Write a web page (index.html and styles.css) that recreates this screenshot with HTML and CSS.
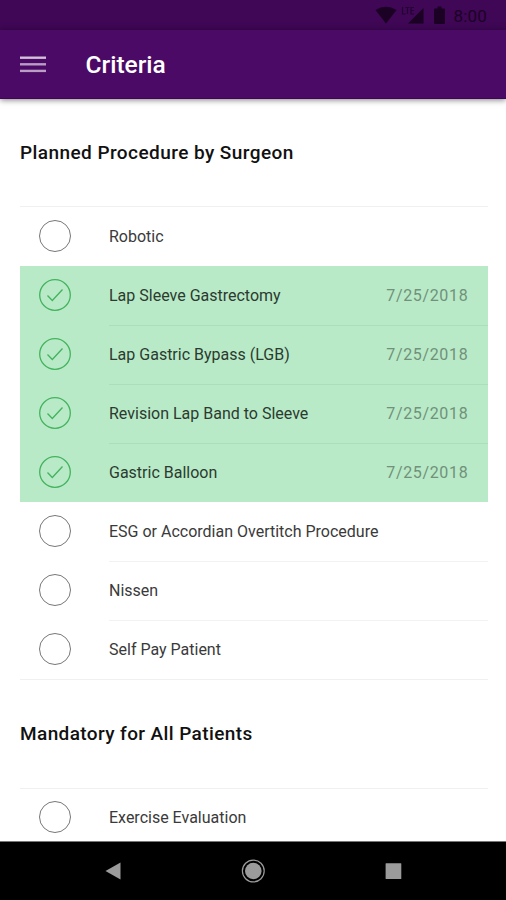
FILE: index.html
```html
<!DOCTYPE html>
<html lang="en">
<head>
<meta charset="utf-8">
<title>Criteria</title>
<link rel="stylesheet" href="styles.css">
</head>
<body>
<div class="status">
  <svg class="status-icons" viewBox="0 0 80 30">
    <path d="M3.500 10Q14 3.500 24.500 10L14 23.500Z"/>
    <path d="M65 8.500h3.500V6.500h4v2H75a1 1 0 0 1 1 1v13.500a1 1 0 0 1-1 1H66a1 1 0 0 1-1-1V9.500a1 1 0 0 1 1-1Z" transform="translate(-3 0)"/>
    <path d="M51.500 8v15.500H36Z"/>
    <path class="lte" d="M30.500 7v7h3M33.500 7.500h4M35.500 7.500V14M42 7.500h-3V14h3M39 10.500h3"/>
  </svg>
  <span class="time">8:00</span>
</div>
<header class="appbar">
  <svg class="menu" viewBox="0 0 26 18"><path class="m1" d="M0 1.700h26"/><path d="M0 8.300h26"/><path d="M0 14.900h26"/></svg>
  <h1>Criteria</h1>
</header>
<main>
  <h2>Planned Procedure by Surgeon</h2>
  <ul>
    <li><i class="ring"></i><div class="cell"><span>Robotic</span></div></li>
    <li class="on"><svg class="check" viewBox="0 0 32 32"><circle cx="16" cy="16" r="15.300"/><path d="M8.500 16.500l4.800 5L23.500 10.500"/></svg><div class="cell"><span>Lap Sleeve Gastrectomy</span><time>7/25/2018</time></div></li>
    <li class="on"><svg class="check" viewBox="0 0 32 32"><circle cx="16" cy="16" r="15.300"/><path d="M8.500 16.500l4.800 5L23.500 10.500"/></svg><div class="cell"><span>Lap Gastric Bypass (LGB)</span><time>7/25/2018</time></div></li>
    <li class="on"><svg class="check" viewBox="0 0 32 32"><circle cx="16" cy="16" r="15.300"/><path d="M8.500 16.500l4.800 5L23.500 10.500"/></svg><div class="cell"><span>Revision Lap Band to Sleeve</span><time>7/25/2018</time></div></li>
    <li class="on"><svg class="check" viewBox="0 0 32 32"><circle cx="16" cy="16" r="15.300"/><path d="M8.500 16.500l4.800 5L23.500 10.500"/></svg><div class="cell"><span>Gastric Balloon</span><time>7/25/2018</time></div></li>
    <li><i class="ring"></i><div class="cell"><span>ESG or Accordian Overtitch Procedure</span></div></li>
    <li><i class="ring"></i><div class="cell"><span>Nissen</span></div></li>
    <li><i class="ring"></i><div class="cell"><span>Self Pay Patient</span></div></li>
  </ul>
  <h2 class="second">Mandatory for All Patients</h2>
  <ul>
    <li><i class="ring"></i><div class="cell"><span>Exercise Evaluation</span></div></li>
  </ul>
</main>
<nav>
  <svg viewBox="0 0 24 24"><path d="M19.500 3.500v17L4.500 12Z"/></svg>
  <svg viewBox="0 0 24 24"><circle cx="12.300" cy="12" r="8.300"/><circle class="outer" cx="12.300" cy="12" r="10.900"/></svg>
  <svg viewBox="0 0 24 24"><rect x="4.600" y="4.300" width="15.700" height="15.700" rx=".5"/></svg>
</nav>
</body>
</html>
```
FILE: styles.css
```css
* { box-sizing: border-box; }
body {
  margin: 0;
  height: 900px;
  display: flex;
  flex-direction: column;
  overflow: hidden;
  background: #fff;
  font-family: Roboto, sans-serif;
}
.status {
  flex: none;
  height: 30px;
  padding-right: 19px;
  display: flex;
  justify-content: flex-end;
  align-items: center;
  background: #3f0755;
  color: #1b0225;
}
.status-icons { width: 80px; height: 30px; fill: #1b0225; margin-right: 1px; }
.lte { fill: none; stroke: #1b0225; stroke-width: 1.2; opacity: .75; }
.time { font-size: 17px; line-height: 30px; padding-top: 1px; letter-spacing: .2px; }
.appbar {
  flex: none;
  height: 69px;
  padding-left: 20px;
  display: flex;
  align-items: center;
  background: #4b0a66;
  border-bottom: 1px solid #3e0656;
  box-shadow: 0 1px 6px rgba(0, 0, 0, .5);
  z-index: 1;
}
.menu { width: 26px; height: 18px; margin-top: 2px; stroke: #b99dc3; stroke-width: 2.4; }
.m1 { stroke: #d3c0d9; }
h1 { margin: 2px 0 0 39.500px; color: #fff; font-size: 24.500px; line-height: 30px; font-weight: 500; }
main { flex: 1; min-height: 0; padding: 0 18px 0 20px; overflow: hidden; }
h2 { margin: 0; height: 107px; line-height: 108px; font-size: 19px; font-weight: 500; letter-spacing: .43px; color: #111; }
.second { height: 108px; letter-spacing: .39px; }
ul { margin: 0; padding: 0; list-style: none; border-top: 1px solid #f0f0f0; }
li { height: 59px; padding-left: 19px; display: flex; align-items: center; }
li:last-child { height: 60px; border-bottom: 1px solid #f0f0f0; }
.second + ul li { padding-bottom: 2px; }
.on { background: #b8eac7; }
.ring, .check { width: 32px; height: 32px; margin-top: -1px; }
.ring { border: 1px solid #777; border-radius: 50%; }
.check { fill: none; stroke: #43b35d; stroke-width: 1.3; }
.cell {
  flex: 1;
  height: 59px;
  margin-left: 38px;
  padding: 0 20px 1px 0;
  display: flex;
  align-items: center;
  justify-content: space-between;
  border-top: 1px solid #f2f2f2;
  color: #3a3a3a;
  font-size: 16px;
}
.on .cell { color: #2c3a30; border-color: #abdfbc; }
li:first-child .cell, .on:nth-child(2) .cell, li:nth-child(6) .cell { border-color: transparent; }
.cell span, .cell time { margin-top: -1px; }
.cell time { color: #71917a; letter-spacing: .65px; margin-right: -.3px; }
nav {
  flex: none;
  height: 59px;
  padding-bottom: 1px;
  display: flex;
  justify-content: center;
  align-items: center;
  gap: 116px;
  background: #000;
  border-top: 1px solid #777;
}
nav svg { width: 24px; height: 24px; fill: #9b9b9b; }
.outer { fill: none; stroke: #9b9b9b; stroke-width: 1.2; }
```
